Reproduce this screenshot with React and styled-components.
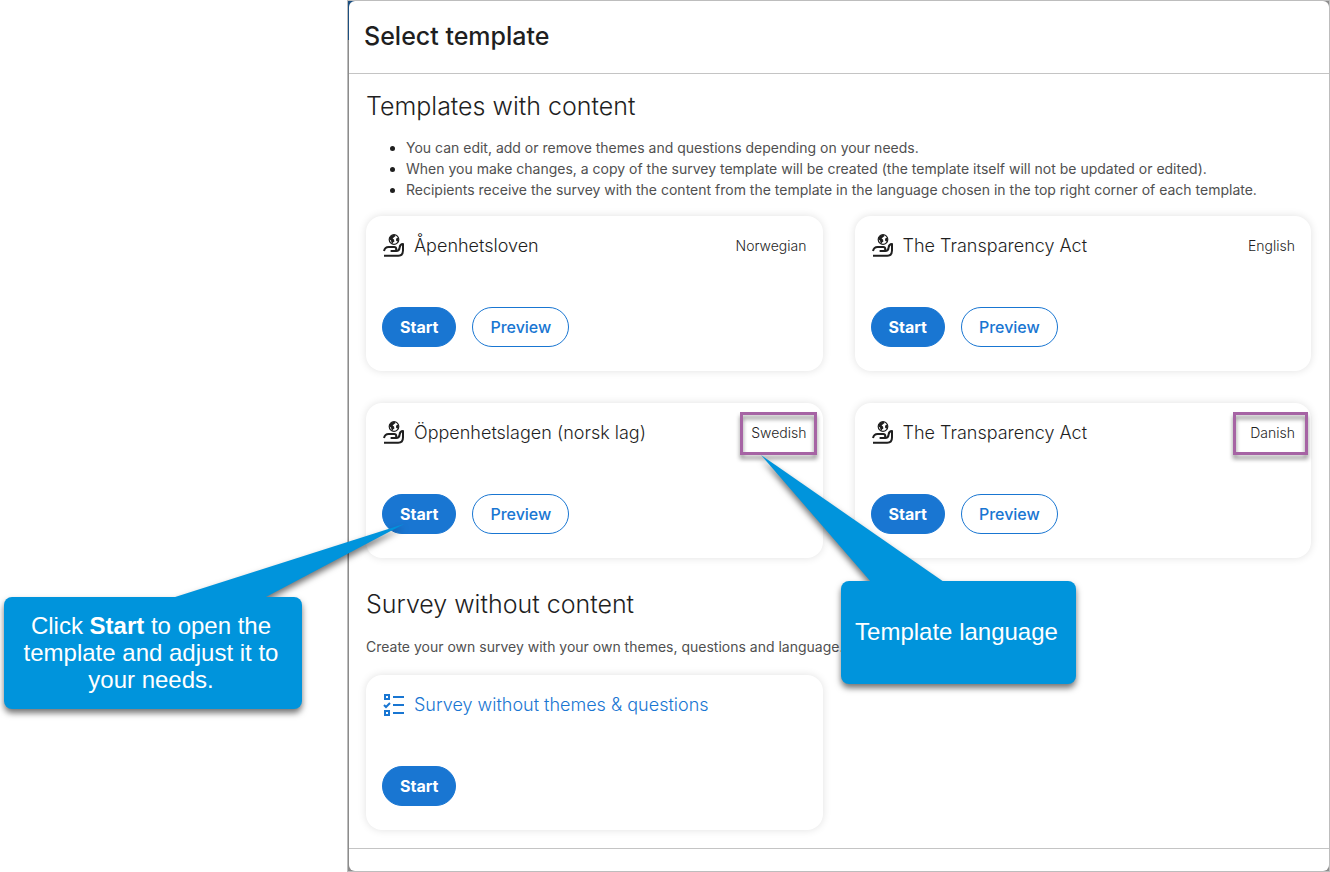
import React from 'react'
import styled, { createGlobalStyle } from 'styled-components'

const templates = [
  { title: 'Åpenhetsloven', language: 'Norwegian' },
  { title: 'The Transparency Act', language: 'English' },
  { title: 'Öppenhetslagen (norsk lag)', language: 'Swedish', marked: true },
  { title: 'The Transparency Act', language: 'Danish', marked: true, wide: true },
]

const HandGlobeIcon = () => (
  <svg width="22" height="26" viewBox="0 0 22 26" fill="none" aria-hidden="true">
    <circle cx="11" cy="6.5" r="4.8" stroke="#1f1f1f" strokeWidth="1.2" />
    <path d="M6.6 4.6 8.8 2.2 11.6 1.8 12.6 3 11 4.2 9.6 5.4 11 6.6 11.4 8.4 10 9.6 9.8 11 8.4 9.6 8 7.6 6.4 6.4Z" fill="#1f1f1f" />
    <path d="M13.2 5.4 15 4.6 15.6 6.8 14.4 8.8 13 7.6Z" fill="#1f1f1f" />
    <path
      d="M1 18C1.6 15.4 3.2 14 5.6 14H11.2C13.8 14 14.2 18 11.2 18M7.6 18H13.2C15.4 18 16.4 16.6 16.6 14.6C16.8 12.4 18 11 20 11V17.6C20 20.8 18.2 22.8 15.2 22.8H1"
      stroke="#1f1f1f"
      strokeWidth="2"
      strokeLinejoin="round"
    />
  </svg>
)

const ChecklistIcon = () => (
  <svg width="22" height="24" viewBox="0 0 22 24" fill="none" stroke="#1976d2" strokeWidth="2" aria-hidden="true">
    <path d="M2 2h4v4H2zM2 18h4v4H2zM10 4h11M10 12h11M10 20h11" />
    <path d="m1 12 2 2 4-4" />
  </svg>
)

const TemplateCard = ({ title, language, marked, wide }) => {
  return (
    <Card>
      <CardHeader>
        <HandGlobeIcon />
        <CardTitle>{title}</CardTitle>
        <Language>
          {language}
          {marked && <Marker $wide={wide} />}
        </Language>
      </CardHeader>
      <Actions>
        <Button type="button" $primary>Start</Button>
        <Button type="button">Preview</Button>
      </Actions>
    </Card>
  )
}

const App = () => {
  return (
    <Page>
      <GlobalStyle />
      <Backdrop>
        <Dialog role="dialog" aria-labelledby="dialog-title">
          <DialogHeader>
            <h1 id="dialog-title">Select template</h1>
          </DialogHeader>
          <DialogBody>
            <SectionTitle>Templates with content</SectionTitle>
            <Notes>
              <li>You can edit, add or remove themes and questions depending on your needs.</li>
              <li>When you make changes, a copy of the survey template will be created (the template itself will not be updated or edited).</li>
              <li>Recipients receive the survey with the content from the template in the language chosen in the top right corner of each template.</li>
            </Notes>
            <CardGrid>
              {templates.map((item) => (
                <TemplateCard key={item.language} {...item} />
              ))}
            </CardGrid>
            <SectionTitle $spaced>Survey without content</SectionTitle>
            <Intro>Create your own survey with your own themes, questions and language.</Intro>
            <CardGrid>
              <Card>
                <CardHeader>
                  <ChecklistIcon />
                  <CardTitle $link>Survey without themes &amp; questions</CardTitle>
                </CardHeader>
                <Actions>
                  <Button type="button" $primary>Start</Button>
                </Actions>
              </Card>
            </CardGrid>
          </DialogBody>
          <DialogFooter />
        </Dialog>
      </Backdrop>

      <StartCallout>
        <Tail width="240" height="74" viewBox="0 0 240 74">
          <path d="M0 74 232 0 92 74Z" />
        </Tail>
        <CalloutBox>
          <p>Click <strong>Start</strong> to open the template and adjust it to your needs.</p>
        </CalloutBox>
      </StartCallout>
      <LanguageCallout>
        <Tail width="190" height="127" viewBox="0 0 190 127">
          <path d="M0 0 183 127H110Z" />
        </Tail>
        <CalloutBox>
          <p>Template language</p>
        </CalloutBox>
      </LanguageCallout>
    </Page>
  )
}

export default App

const GlobalStyle = createGlobalStyle`
  *, *::before, *::after {
    box-sizing: border-box;
  }
  body {
    margin: 0;
    background: #fff;
    color: #1f1f1f;
    font-family: Inter, "Liberation Sans", sans-serif;
  }
  h1, h2, h3, p, ul {
    margin: 0;
    padding: 0;
  }
`

const Page = styled.div`
  position: relative;
  padding-left: 347px;
`

/* the strip of the page behind the dialog, seen at its edge and corners */
const Backdrop = styled.div`
  display: flex;
  min-height: 100vh;
  padding-left: 1px;
  border: 1px solid #bdbdbd;
  background: linear-gradient(#1c4f80, #1c4f80) left top / 8px 39px no-repeat, #8c8c8c;
`

const Dialog = styled.section`
  display: flex;
  flex: 1;
  flex-direction: column;
  border-radius: 6px;
  background: #fff;
`

const DialogHeader = styled.header`
  display: flex;
  align-items: center;
  height: 73px;
  padding: 0 15px 2px;
  border-bottom: 1px solid #c4c4c4;

  h1 {
    font-size: 25px;
    line-height: 32px;
    font-weight: 500;
  }
`

const DialogBody = styled.main`
  flex: 1;
  padding: 16px 18px 18px 17px;
`

const DialogFooter = styled.footer`
  height: 23px;
  border-top: 1px solid #c4c4c4;
`

const SectionTitle = styled.h2`
  margin: ${({ $spaced }) => ($spaced ? '30px' : '0')} 0 16px;
  font-size: 25px;
  line-height: 32px;
  font-weight: 300;
`

const Notes = styled.ul`
  margin: -1px 0 16px;
  padding-left: 40px;
  font-size: 14px;
  line-height: 21px;

  li {
    color: #505050;
  }
  li::marker {
    color: #1f1f1f;
  }
`

const Intro = styled.p`
  margin-bottom: 18px;
  font-size: 14px;
  line-height: 21px;
  color: #505050;
`

const CardGrid = styled.div`
  display: grid;
  grid-template-columns: repeat(2, 1fr);
  gap: 32px;
`

const Card = styled.article`
  padding: 16px 16px 24px;
  border-radius: 16px;
  background: #fff;
  box-shadow: 0 0 8px rgba(0, 0, 0, 0.12);
`

const CardHeader = styled.div`
  display: flex;
  align-items: center;
  gap: 9px;
  margin-bottom: 47px;

  svg {
    flex: none;
    margin-left: 1px;
  }
`

const CardTitle = styled.h3`
  flex: 1;
  font-size: 18px;
  line-height: 28px;
  font-weight: 300;
  color: ${({ $link }) => ($link ? '#1976d2' : '#1f1f1f')};
`

const Language = styled.span`
  position: relative;
  font-size: 14px;
  line-height: 20px;
  font-weight: 300;
`

/* highlight frame drawn over the card around the language name */
const Marker = styled.span`
  position: absolute;
  top: -11px;
  right: ${({ $wide }) => ($wide ? '-13px' : '-10px')};
  bottom: -12px;
  left: ${({ $wide }) => ($wide ? '-17px' : '-11px')};
  border: 3px solid #a664a4;
  filter: drop-shadow(0 4px 2px rgba(0, 0, 0, 0.45));
`

const Actions = styled.div`
  display: flex;
  gap: 16px;
`

const Button = styled.button`
  height: 40px;
  padding: 0 17px;
  border: 1px solid #1976d2;
  border-radius: 20px;
  background: ${({ $primary }) => ($primary ? '#1976d2' : '#fff')};
  color: ${({ $primary }) => ($primary ? '#fff' : '#1976d2')};
  font-family: inherit;
  font-size: 16px;
  font-weight: ${({ $primary }) => ($primary ? 700 : 500)};
  cursor: pointer;
`

const Callout = styled.aside`
  position: absolute;
  filter: drop-shadow(0 4px 3px rgba(0, 0, 0, 0.55));
`

const StartCallout = styled(Callout)`
  top: 597px;
  left: 4px;
  width: 298px;
  height: 112px;

  > svg {
    left: 168px;
    bottom: 111px;
  }
`

const LanguageCallout = styled(Callout)`
  top: 581px;
  left: 841px;
  width: 235px;
  height: 103px;

  > svg {
    left: -80px;
    bottom: 102px;
  }
`

const Tail = styled.svg`
  position: absolute;
  fill: #0094dc;
`

const CalloutBox = styled.div`
  display: flex;
  align-items: center;
  justify-content: center;
  height: 100%;
  padding: 0 12px 2px 8px;
  border-radius: 8px;
  background: #0094dc;
  color: #fff;
  font-family: "Liberation Sans", Arial, sans-serif;
  font-size: 24px;
  line-height: 27px;
  text-align: center;
`
